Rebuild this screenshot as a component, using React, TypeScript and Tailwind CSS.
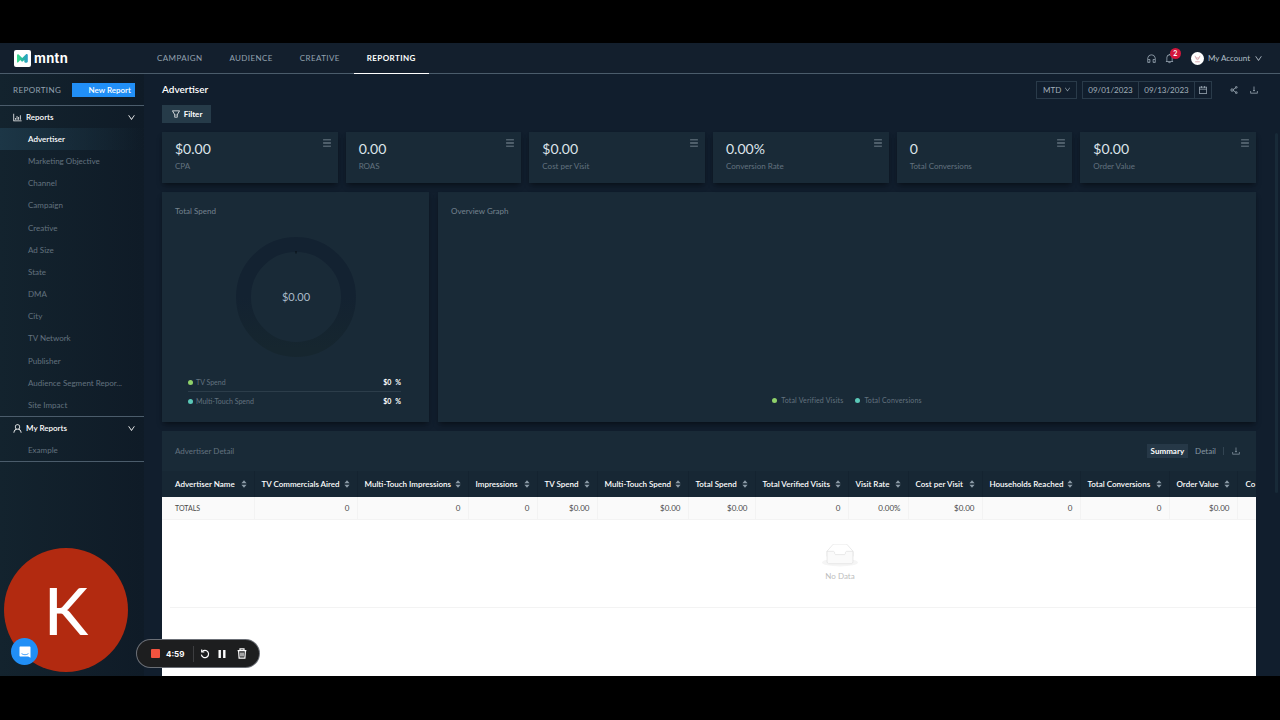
import type { ReactNode } from "react";
import {
  AiOutlineBarChart,
  AiOutlineBell,
  AiOutlineCalendar,
  AiOutlineCustomerService,
  AiOutlineDown,
  AiOutlineDownload,
  AiOutlineFilter,
  AiOutlineMenu,
  AiOutlineShareAlt,
  AiOutlineUser,
} from "react-icons/ai";
import { clsx } from "clsx";

const tabs = ["CAMPAIGN", "AUDIENCE", "CREATIVE", "REPORTING"];

const reports = [
  "Advertiser",
  "Marketing Objective",
  "Channel",
  "Campaign",
  "Creative",
  "Ad Size",
  "State",
  "DMA",
  "City",
  "TV Network",
  "Publisher",
  "Audience Segment Repor...",
  "Site Impact",
];

const metrics = [
  { value: "$0.00", label: "CPA" },
  { value: "0.00", label: "ROAS" },
  { value: "$0.00", label: "Cost per Visit" },
  { value: "0.00%", label: "Conversion Rate" },
  { value: "0", label: "Total Conversions" },
  { value: "$0.00", label: "Order Value" },
];

const columns = [
  { title: "Advertiser Name", total: "TOTALS", width: "w-[92px]" },
  { title: "TV Commercials Aired", total: "0", width: "w-[103px]" },
  { title: "Multi-Touch Impressions", total: "0", width: "w-[111px]" },
  { title: "Impressions", total: "0", width: "w-[69px]" },
  { title: "TV Spend", total: "$0.00", width: "w-[60px]" },
  { title: "Multi-Touch Spend", total: "$0.00", width: "w-[91px]" },
  { title: "Total Spend", total: "$0.00", width: "w-[67px]" },
  { title: "Total Verified Visits", total: "0", width: "w-[93px]" },
  { title: "Visit Rate", total: "0.00%", width: "w-[60px]" },
  { title: "Cost per Visit", total: "$0.00", width: "w-[74px]" },
  { title: "Households Reached", total: "0", width: "w-[98px]" },
  { title: "Total Conversions", total: "0", width: "w-[89px]" },
  { title: "Order Value", total: "$0.00", width: "w-[68px]" },
  { title: "Co", total: "", width: "w-[19px]" },
];

const Logo = () => (
  <a href="#" className="flex items-center gap-[3px] text-white">
    <svg viewBox="0 0 17 17" className="size-[17px]">
      <defs>
        <linearGradient id="peak" x1="0" x2="1">
          <stop offset="0" stopColor="#3be08c" />
          <stop offset="0.5" stopColor="#27b7a0" />
          <stop offset="1" stopColor="#2a9fc9" />
        </linearGradient>
      </defs>
      <rect width="17" height="17" rx="2" fill="#fff" />
      <path
        d="M3 5.200c0-.9.900-1.300 1.600-.7L8.200 8l3.600-3.600c.8-.7 2-.3 2 .8v6.300c0 .7-.5 1.200-1.200 1.200h-1.300c-.6 0-1-.4-1-.9V10l-1.400 1.300c-.5.500-1 .5-1.500 0L6.200 10 4.300 12.300c-.5.500-1.300.3-1.300-.4z"
        fill="url(#peak)"
      />
    </svg>
    <span className="font-['Inter',sans-serif] text-[13px] leading-4 font-bold tracking-wide">
      mntn
    </span>
  </a>
);

const Header = () => (
  <header className="flex h-[31px] items-stretch justify-between border-b border-[#4b5c6b] bg-[#131f2d] pr-[17px] pl-3.5">
    <div className="flex">
      <div className="flex w-[130px] items-center">
        <Logo />
      </div>
      <nav className="flex gap-px">
        {tabs.map((tab) => (
          <a
            key={tab}
            href="#"
            className={clsx(
              "-mb-px flex items-center border-b px-[13px] text-[8px] tracking-wider",
              tab === "REPORTING"
                ? "border-white font-bold text-white"
                : "border-transparent text-[#94a2b0]",
            )}
          >
            {tab}
          </a>
        ))}
      </nav>
    </div>
    <div className="flex items-center text-[#9aa8b4]">
      <button aria-label="Support" className="mr-[7px]">
        <AiOutlineCustomerService className="size-[11px]" />
      </button>
      <button aria-label="Notifications" className="relative mr-4">
        <AiOutlineBell className="size-[11px]" />
        <span className="absolute -top-[5px] left-1.5 flex size-[11px] items-center justify-center rounded-full bg-[#d3173c] text-[7px] font-bold text-white">
          2
        </span>
      </button>
      <button className="flex items-center gap-1 text-[8px] text-[#b5c0ca]">
        <svg viewBox="0 0 13 13" className="size-[13px]">
          <circle cx="6.5" cy="6.5" r="6.5" fill="#fff" />
          <path
            d="M4 3.800 5 6h3l1-2.200M5.200 6c0 2.200 2.600 2.200 2.600 0M4.200 9.800h4.600"
            fill="none"
            stroke="#c98790"
            strokeWidth=".7"
          />
        </svg>
        My Account
        <AiOutlineDown className="size-[9px]" />
      </button>
    </div>
  </header>
);

const SectionTitle = ({ icon, title }: { icon: ReactNode; title: string }) => (
  <button className="flex h-[22px] w-full items-center pr-2 pl-3 text-[8px] font-semibold text-white">
    {icon}
    <span className="ml-[3px] grow text-left">{title}</span>
    <AiOutlineDown className="size-[9px]" />
  </button>
);

const Sidebar = () => (
  <aside className="w-36 shrink-0 bg-linear-to-r from-[#13232e] to-[#0f1b27]">
    <div className="flex h-8 items-center justify-between border-b border-[#4b5c6b] pr-[9px] pl-[13px]">
      <h2 className="text-[8px] tracking-wider text-[#94a2b0]">REPORTING</h2>
      <button className="h-3.5 w-[63px] bg-[#218ff6] pr-1 text-right text-[8px] font-semibold text-white">
        New Report
      </button>
    </div>
    <SectionTitle icon={<AiOutlineBarChart className="size-[11px]" />} title="Reports" />
    <ul className="flex h-[289px] flex-col justify-between border-b border-[#4b5c6b] text-[8px]">
      {reports.map((report) => (
        <li key={report}>
          <a
            href="#"
            className={clsx(
              "block pl-7 leading-[22px]",
              report === "Advertiser"
                ? "bg-linear-to-r from-[#1c3646] to-transparent font-semibold text-white"
                : "text-[#63727f]",
            )}
          >
            {report}
          </a>
        </li>
      ))}
    </ul>
    <SectionTitle icon={<AiOutlineUser className="size-[11px]" />} title="My Reports" />
    <a
      href="#"
      className="block border-b border-[#4b5c6b] pl-7 text-[8px] leading-[22px] text-[#63727f]"
    >
      Example
    </a>
  </aside>
);

const DateControls = () => (
  <div className="flex items-center text-[8px] text-[#a3b0bb]">
    <button className="flex h-[18px] w-[41px] items-center justify-between border border-[#2a3b4a] pr-[5px] pl-1.5">
      MTD
      <AiOutlineDown className="size-[7px]" />
    </button>
    <div className="ml-[5px] flex h-[18px] items-center border border-[#2a3b4a]">
      <input
        aria-label="Start date"
        defaultValue="09/01/2023"
        className="h-4 w-14 border-r border-[#2a3b4a] text-center"
      />
      <input
        aria-label="End date"
        defaultValue="09/13/2023"
        className="h-4 w-14 border-r border-[#2a3b4a] text-center"
      />
      <button aria-label="Open calendar" className="px-[3px]">
        <AiOutlineCalendar className="size-2.5" />
      </button>
    </div>
    <button aria-label="Share" className="ml-[17px]">
      <AiOutlineShareAlt className="size-2.5" />
    </button>
    <button aria-label="Download" className="ml-2.5">
      <AiOutlineDownload className="size-2.5" />
    </button>
  </div>
);

const MetricCard = ({ value, label }: { value: string; label: string }) => (
  <div className="relative h-[51px] bg-[#192a37] px-[13px] pt-2 shadow-md shadow-black/30">
    <p className="text-sm leading-[18px] text-[#dde4ea]">{value}</p>
    <p className="text-[8px] leading-4 text-[#63727f]">{label}</p>
    <button aria-label={`${label} menu`} className="absolute top-1.5 right-1.5 text-[#8795a1]">
      <AiOutlineMenu className="size-2.5" />
    </button>
  </div>
);

const SpendRow = ({ color, label }: { color: string; label: string }) => (
  <div className="flex h-[18px] items-center text-[7px]">
    <span className={clsx("mr-[3px] size-[5px] rounded-full", color)} />
    <span className="grow text-[#63727f]">{label}</span>
    <span className="flex gap-1 font-bold text-white">
      <span>$0</span>
      <span>%</span>
    </span>
  </div>
);

const TotalSpend = () => (
  <section className="h-[230px] w-[267px] shrink-0 bg-[#192a37] px-[13px] pt-3 shadow-md shadow-black/30">
    <h2 className="text-[8px] leading-[14px] text-[#75838f]">Total Spend</h2>
    <svg viewBox="0 0 120 120" className="mx-auto mt-[19px] size-[120px]">
      <defs>
        <linearGradient id="ring" x1="0" y1="0" x2="0" y2="1">
          <stop offset="0.5" stopColor="#132231" />
          <stop offset="1" stopColor="#16262f" />
        </linearGradient>
      </defs>
      <circle cx="60" cy="60" r="52.5" fill="none" stroke="url(#ring)" strokeWidth="15" />
      <path d="M60 14v2.500" stroke="#060c12" />
      <text x="60" y="64" textAnchor="middle" fontSize="11" fill="#a9bac8">
        $0.00
      </text>
    </svg>
    <div className="mt-[17px] mr-[15px] ml-[13px] divide-y divide-[#2c3d4a]">
      <SpendRow color="bg-[#8fd16a]" label="TV Spend" />
      <SpendRow color="bg-[#5bc8b8]" label="Multi-Touch Spend" />
    </div>
  </section>
);

const OverviewGraph = () => (
  <section className="flex h-[230px] grow flex-col justify-between bg-[#192a37] px-[13px] pt-3 pb-4 shadow-md shadow-black/30">
    <h2 className="text-[8px] leading-[14px] text-[#75838f]">Overview Graph</h2>
    <div className="flex justify-center gap-3 text-[7px] leading-3 tracking-wide text-[#63727f]">
      <span className="flex items-center gap-1">
        <span className="size-[5px] rounded-full bg-[#8fd16a]" />
        Total Verified Visits
      </span>
      <span className="flex items-center gap-1">
        <span className="size-[5px] rounded-full bg-[#5bc8b8]" />
        Total Conversions
      </span>
    </div>
  </section>
);

const Sorter = () => (
  <svg viewBox="0 0 6 8" className="w-1.5 shrink-0" fill="#8c9ba7">
    <path d="M3 .3 5.600 3.200H.4zM3 7.700.4 4.800h5.200z" />
  </svg>
);

const EmptyBox = () => (
  <svg viewBox="0 0 64 41" className="w-9" fill="none">
    <ellipse cx="32" cy="33" rx="32" ry="7" fill="#f5f5f5" />
    <g stroke="#d9d9d9">
      <path d="M55 12.760 44.854 1.258C44.367.474 43.656 0 42.907 0H21.093c-.749 0-1.460.474-1.947 1.257L9 12.761V22h46v-9.240z" />
      <path
        d="M41.613 15.931c0-1.605.994-2.930 2.227-2.931H55v18.137C55 33.260 53.680 35 52.050 35h-40.100C10.320 35 9 33.259 9 31.137V13h11.160c1.233 0 2.227 1.323 2.227 2.928v.022c0 1.605 1.005 2.901 2.237 2.901h14.752c1.232 0 2.237-1.308 2.237-2.913v-.007z"
        fill="#fafafa"
      />
    </g>
  </svg>
);

const AdvertiserDetail = () => (
  <section className="flex min-h-0 grow flex-col overflow-hidden bg-white">
    <div className="flex h-10 shrink-0 items-center justify-between bg-[#192a37] pr-[15px] pl-[13px] text-[8px]">
      <h2 className="text-[#63727f]">Advertiser Detail</h2>
      <div className="flex items-center text-[#8796a3]">
        <button className="h-3.5 bg-[#263847] px-1 font-bold text-white">Summary</button>
        <button className="px-[7px]">Detail</button>
        <span className="mr-[7px] h-2 w-px bg-[#324452]" />
        <button aria-label="Download table">
          <AiOutlineDownload className="size-2.5" />
        </button>
      </div>
    </div>
    <table className="w-full shrink-0 table-fixed text-[8px]">
      <thead className="bg-[#172734] text-white">
        <tr className="h-[26px]">
          {columns.map((column) => (
            <th
              key={column.title}
              className={clsx(
                "border-r border-[#142330] p-0 pr-[7px] pl-[7px] font-semibold first:pl-[13px] last:border-r-0 last:pr-0 last:pl-2",
                column.width,
              )}
            >
              <div className="flex items-center justify-between whitespace-nowrap">
                {column.title}
                {column.total && <Sorter />}
              </div>
            </th>
          ))}
        </tr>
      </thead>
      <tbody>
        <tr className="h-[22px] bg-[#fafafa] text-right text-[#4a4a4a]">
          {columns.map((column) => (
            <td
              key={column.title}
              className="border-r border-b border-[#f3f3f3] p-0 pr-[7px] first:pl-[13px] first:text-left first:text-[7px] last:border-r-0"
            >
              {column.total}
            </td>
          ))}
        </tr>
      </tbody>
    </table>
    <div className="ml-2 flex h-[88px] shrink-0 flex-col items-center justify-center gap-0.5 border-b border-[#f3f3f3] pl-[254px] text-[8px] text-[#bdbdbd]">
      <EmptyBox />
      No Data
    </div>
  </section>
);

const Recorder = () => (
  <div className="absolute bottom-[9px] left-[137px] flex h-[27px] w-[122px] items-center rounded-full bg-[#1d1e1f] pl-3.5 text-white ring-1 ring-[#6b6f76]">
    <button aria-label="Stop recording" className="size-[9px] rounded-[1px] bg-[#f1533f]" />
    <span className="ml-1.5 w-[27px] font-['Inter',sans-serif] text-[8px] font-bold">4:59</span>
    <span className="mr-1.5 h-4 w-px bg-[#3d3e40]" />
    <button aria-label="Restart">
      <svg viewBox="0 0 10 10" className="size-2.5" fill="none" stroke="currentColor">
        <path d="M2.200 2.700A3.600 3.600 0 1 1 1.400 5.600" strokeWidth="1.2" />
        <path d="M1.700.5v2.500h2.600" strokeWidth="1.2" />
      </svg>
    </button>
    <button aria-label="Pause" className="ml-2">
      <svg viewBox="0 0 8 8" className="size-2" fill="currentColor">
        <path d="M.5 0h2.400v8H.5zM5.100 0h2.400v8H5.100z" />
      </svg>
    </button>
    <button aria-label="Delete recording" className="ml-[11px]">
      <svg
        viewBox="0 0 10 11"
        className="w-2.5"
        fill="none"
        stroke="currentColor"
        strokeWidth="1.2"
      >
        <path d="M.6 2.600h8.800M3 2.400V.8h4v1.600M1.600 2.800l.5 7.400h5.800l.5-7.400M4 4.600v3.800M6 4.600v3.800" />
      </svg>
    </button>
  </div>
);

const CameraBubble = () => (
  <div className="absolute bottom-1 left-1 flex size-[124px] items-center justify-center rounded-full bg-[#b22a10] text-[66px] leading-none font-medium text-white">
    K
  </div>
);

const ChatButton = () => (
  <button
    aria-label="Open chat"
    className="absolute bottom-[11px] left-[11px] flex size-[27px] items-center justify-center rounded-full bg-[#218ff6]"
  >
    <svg viewBox="0 0 12 12" className="size-3">
      <path d="M1.500.5h9c.6 0 1 .4 1 1v10.300L9.200 10.500H1.500c-.6 0-1-.4-1-1v-8c0-.6.400-1 1-1z" fill="#fff" />
      <path d="M2.500 7.600c2 1.500 5 1.500 7 0" fill="none" stroke="#218ff6" strokeWidth=".8" />
    </svg>
  </button>
);

const App = () => (
  <div className="flex h-screen flex-col bg-black pt-[43px] pb-11 font-['Lato',sans-serif]">
    <div className="relative flex min-h-0 grow flex-col bg-[#111e2d]">
      <Header />
      <div className="flex min-h-0 grow">
        <Sidebar />
        <main className="flex min-w-0 grow flex-col pl-[18px]">
          <div className="flex h-[31px] items-center justify-between pr-4">
            <h1 className="text-[10px] font-semibold text-white">Advertiser</h1>
            <DateControls />
          </div>
          <div className="flex min-h-0 grow flex-col pr-[19px]">
            <button className="flex h-[18px] w-[49px] shrink-0 items-center justify-center gap-[3px] bg-[#263b49] text-[8px] font-bold text-white">
              <AiOutlineFilter className="size-2.5" />
              Filter
            </button>
            <div className="mt-[9px] grid grid-cols-6 gap-2">
              {metrics.map((metric) => (
                <MetricCard key={metric.label} {...metric} />
              ))}
            </div>
            <div className="my-[9px] flex gap-[9px]">
              <TotalSpend />
              <OverviewGraph />
            </div>
            <AdvertiserDetail />
          </div>
        </main>
        {/* scrollbar thumb */}
        <div className="mt-[59px] mr-0.5 h-[360px] w-[3px] shrink-0 rounded-full bg-[#182a38]" />
      </div>
      <CameraBubble />
      <ChatButton />
      <Recorder />
    </div>
  </div>
);

export default App;
